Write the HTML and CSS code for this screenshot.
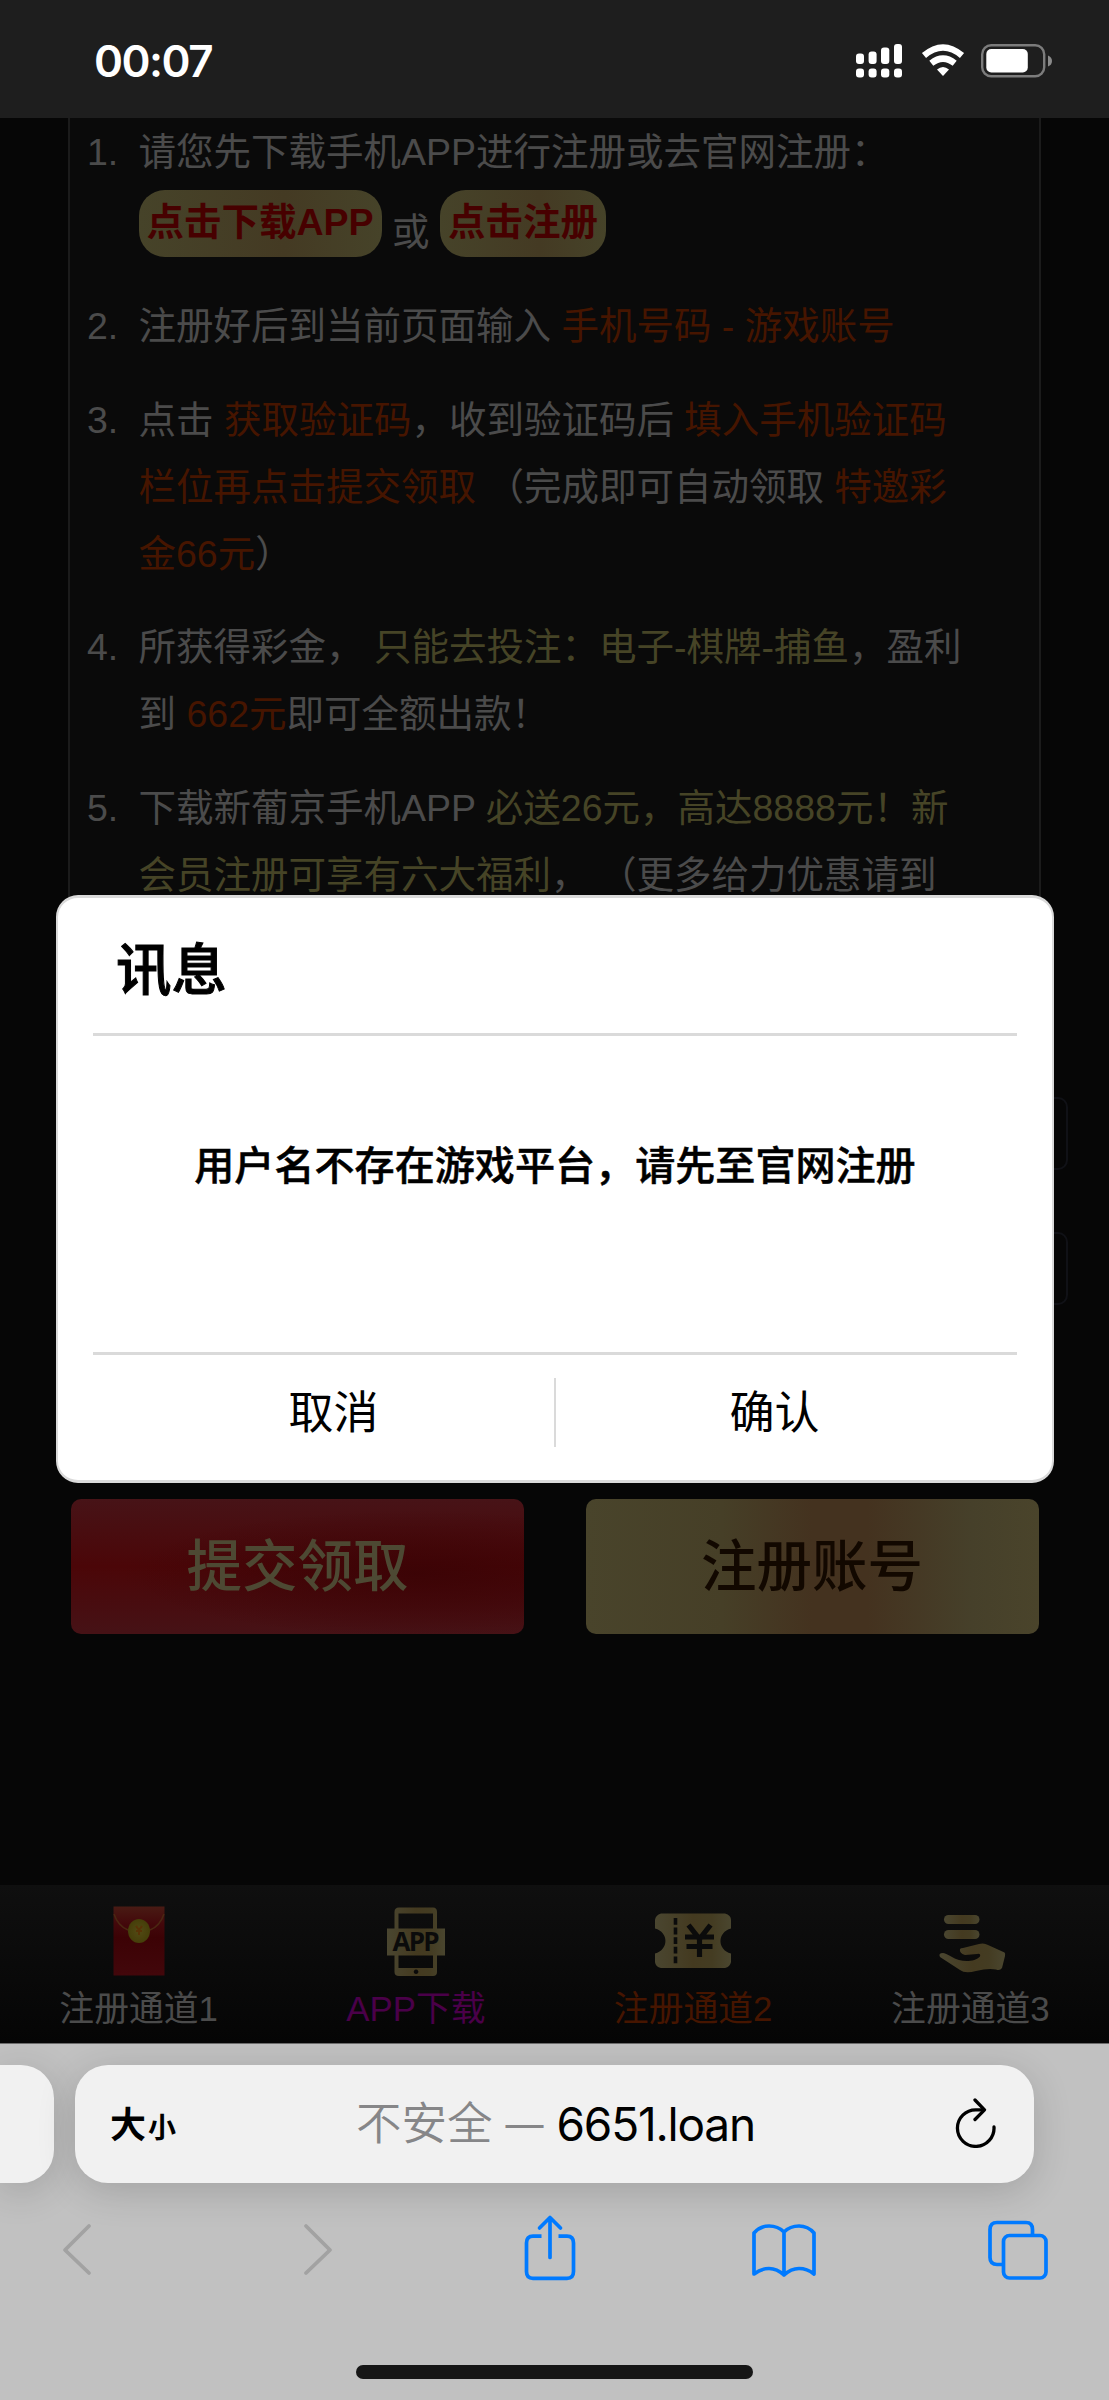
FILE: index.html
```html
<!DOCTYPE html>
<html lang="zh-CN">
<head>
<meta charset="utf-8">
<title>6651.loan</title>
<link rel="stylesheet" href="styles.css">
</head>
<body>
<header class="status">
  <span class="clock">00:07</span>
  <div class="status-icons">
    <svg width="46" height="34" viewBox="0 0 46 34" fill="#fff"><rect x="0" y="9.500" width="8" height="10.500" rx="3"/><rect x="12.600" y="7.500" width="8" height="12.500" rx="3"/><rect x="25" y="3.500" width="8.300" height="16.500" rx="3"/><rect x="38" y="0" width="8" height="20" rx="3"/><rect x="0" y="24.500" width="8" height="9" rx="3"/><rect x="12.600" y="24.500" width="8" height="9" rx="3"/><rect x="25" y="24.500" width="8.300" height="9" rx="3"/><rect x="38" y="24.500" width="8" height="9" rx="3"/></svg>
    <svg class="wifi" width="44" height="33" viewBox="0 0 44 33" fill="none" stroke="#fff" stroke-width="6.400"><path d="M3 11.500Q22-4.500 41 11.500"/><path d="M10.300 19.300Q22 10 33.700 19.300"/><path d="M16 25.500Q22 20.500 28 25.500L22 32Z" fill="#fff" stroke="none"/></svg>
    <svg class="battery" width="71" height="34" viewBox="0 0 71 34"><rect x="1.200" y="1.200" width="62" height="31" rx="9" fill="none" stroke="#7c7c7c" stroke-width="2.400"/><rect x="5.300" y="5" width="41.500" height="23.400" rx="5" fill="#fff"/><path d="M67 11.500Q71 13 71 17T67 22.500Z" fill="#8a8a8a"/></svg>
  </div>
</header>

<main class="page">
  <ol class="rules">
    <li><span class="num">1.</span>
      <div>请您先下载手机APP进行注册或去官网注册：
        <div class="links"><a class="pill">点击下载APP</a><span>或</span><a class="pill">点击注册</a></div>
      </div></li>
    <li><span class="num">2.</span><div>注册好后到当前页面输入 <b class="hot">手机号码 - 游戏账号</b></div></li>
    <li><span class="num">3.</span><div>点击 <b class="hot">获取验证码</b>，收到验证码后 <b class="hot">填入手机验证码<br>栏位再点击提交领取</b> （完成即可自动领取 <b class="hot">特邀彩<br>金66元</b>）</div></li>
    <li><span class="num">4.</span><div>所获得彩金， <b class="gold">只能去投注：电子-棋牌-捕鱼</b>，盈利<br>到 <b class="hot">662元</b>即可全额出款！</div></li>
    <li><span class="num">5.</span><div>下载新葡京手机APP <b class="gold">必送26元，高达8888元！新<br>会员注册可享有六大福利</b>， （更多给力优惠请到</div></li>
  </ol>
  <div class="fields"><div class="field"></div><div class="field"></div></div>
  <div class="actions"><a class="btn btn-red">提交领取</a><a class="btn btn-gold">注册账号</a></div>

  <section class="modal">
    <h2 class="modal-title">讯息</h2>
    <p class="modal-text">用户名不存在游戏平台，请先至官网注册</p>
    <div class="modal-actions"><a>取消</a><i class="split"></i><a>确认</a></div>
  </section>
</main>

<nav class="tabs">
  <a class="tab">
    <svg width="52" height="70" viewBox="0 0 52 70">
      <defs>
        <linearGradient id="env" x1="0" y1="0" x2="0" y2="1"><stop offset="0" stop-color="#491b14"/><stop offset=".25" stop-color="#43080b"/><stop offset=".45" stop-color="#3c0205"/><stop offset="1" stop-color="#42070b"/></linearGradient>
        <radialGradient id="coin"><stop offset="0" stop-color="#534a15"/><stop offset="1" stop-color="#453e09"/></radialGradient>
        <linearGradient id="metal"><stop offset="0" stop-color="#4a4630"/><stop offset=".5" stop-color="#443a20"/><stop offset=".75" stop-color="#443c22"/><stop offset="1" stop-color="#4a462f"/></linearGradient>
      </defs>
      <rect x=".5" y=".5" width="51" height="69" fill="url(#env)"/>
      <path d="M1 8Q5 20 15 24M51 8Q47 20 37 24" fill="none" stroke="#4b2712" stroke-width="1.500"/>
      <ellipse cx="26" cy="25" rx="11" ry="12" fill="url(#coin)"/>
      <path d="M23 20l3 4 3-4M26 24v5M23 25h6" fill="none" stroke="#583306" stroke-width="2"/>
    </svg>
    <span>注册通道1</span>
  </a>
  <a class="tab tab-app">
    <svg width="60" height="70" viewBox="0 0 60 70"><path fill="url(#metal)" fill-rule="evenodd" d="M13 1.500H47Q51 1.500 51 6V22.500H59V49.500H51V66Q51 70 47 70H13Q8.500 70 8.500 66V49.500H1V22.500H8.500V6Q8.500 1.500 13 1.500ZM12.500 7.500V22.500H47V7.500ZM12.500 49.500V62H47V49.500ZM30 63.500a2.300 2.300 0 1 0 .1 0Z"/><text x="30" y="44.800" text-anchor="middle" textLength="47" class="icon-app">APP</text></svg>
    <span>APP下载</span>
  </a>
  <a class="tab tab-hot">
    <svg width="78" height="70" viewBox="0 0 78 70"><path fill="url(#metal)" d="M7 7.500H71Q77 9 77 14V22.500C63 26 63 44 77 47.500V56Q76 61 71 62H7Q1.500 61 1 56V47.500C15 44 15 26 1 22.500V14Q1.500 9 7 7.500Z"/><path d="M21.500 12V58" stroke="#0b0b0b" stroke-width="3.600" stroke-dasharray="6.800 2.800"/><path d="M34.500 19L45.500 33L56.500 19M31 31H60M32.500 40.500H58.500M45.500 32V51" fill="none" stroke="#0b0b0b" stroke-width="5.200"/></svg>
    <span>注册通道2</span>
  </a>
  <a class="tab">
    <svg class="hand" width="68" height="70" viewBox="0 0 68 70" fill="url(#metal)"><rect x="6" y="9" width="35.500" height="9" rx="4.500"/><rect x="6" y="24" width="35.500" height="9" rx="4.500"/><path d="M25 42L41 38Q46 36.500 50 39L66.500 46.500Q67.500 47 67 50L64 62Q62 65 58 63.500Q50 62 38 65Q27 68 22 64L2 51Q0 47 5 47Q7 47 14 51C23 57 37 56 42 50.500Q43 47 39 48L27 49Q21 47 22 43Q23 42 25 42Z"/></svg>
    <span>注册通道3</span>
  </a>
</nav>

<footer class="browser">
  <div class="address-row">
    <div class="address-prev"></div>
    <div class="address">
      <span class="aa">大<small>小</small></span>
      <span class="url"><span class="unsafe">不安全</span><span class="dash">—</span><span>6651.loan</span></span>
      <svg class="reload" width="42" height="50" viewBox="0 0 42 50" fill="none" stroke="#000" stroke-width="3.300" stroke-linecap="round" stroke-linejoin="round"><path d="M28 11.800H21A18.300 18.300 0 1 0 39 29"/><path d="M20 2L29.500 11.800L20 21.500"/></svg>
    </div>
  </div>
  <div class="toolbar">
    <svg class="back" width="30" height="70" viewBox="0 0 30 70" fill="none" stroke="#a2a2a2" stroke-width="3.800" stroke-linecap="round" stroke-linejoin="round"><path d="M27 13L3 37L27 60"/></svg>
    <svg class="forward" width="30" height="70" viewBox="0 0 30 70" fill="none" stroke="#a2a2a2" stroke-width="3.800" stroke-linecap="round" stroke-linejoin="round"><path d="M3 13L27 37L3 60"/></svg>
    <svg class="share" width="52" height="70" viewBox="0 0 52 70" fill="none" stroke="#007aff" stroke-width="3.700" stroke-linejoin="round"><path d="M17.500 23.200H9Q2.500 23.200 2.500 30V58.500Q2.500 65.300 9 65.300H43Q49.500 65.300 49.500 58.500V30Q49.500 23.200 43 23.200H34.500"/><path d="M26 44.500V5M15.500 15L26 4.500L36.500 15" stroke-linecap="round"/></svg>
    <svg class="book" width="64" height="70" viewBox="0 0 64 70" fill="none" stroke="#007aff" stroke-width="3.700" stroke-linecap="round" stroke-linejoin="round"><path d="M32 19Q26 13 17 13T2 20V61Q9 55.500 17 55.500T32 62Q39 55.500 47 55.500T62 61V20Q56 13 47 13T32 19V62"/></svg>
    <svg class="windows" width="60" height="70" viewBox="0 0 60 70" fill="none" stroke="#007aff" stroke-width="3.700"><rect x="15.500" y="22.500" width="42.500" height="42.500" rx="6"/><path d="M15.500 51.500H9Q2 51.500 2 44.500V16.500Q2 9.500 9 9.500H38Q44.500 9.500 44.500 16.500V22.500"/></svg>
  </div>
  <div class="home"></div>
</footer>
</body>
</html>
```
FILE: styles.css
```css
* { box-sizing: border-box; }
body {
  margin: 0;
  width: 1109px;
  height: 2400px;
  display: flex;
  flex-direction: column;
  overflow: hidden;
  background: #060606;
  color: #4b4b4b;
  font-family: "Liberation Sans", "Noto Sans CJK SC", sans-serif;
}
svg { display: block; flex: none; }

/* phone status bar */
.status {
  height: 118px;
  background: #1e1e1e;
  display: flex;
  justify-content: space-between;
  align-items: center;
  padding: 4px 57px 0 94px;
}
.clock { color: #fff; font: 600 44px/1 Inter, sans-serif; letter-spacing: -1.500px; }
.status-icons { display: flex; }
.wifi { margin-left: 18.500px; }
.battery { margin-left: 16.500px; }

/* dimmed page */
.page { position: relative; height: 1767px; flex: none; }
.rules {
  list-style: none;
  margin: 0 68px;
  height: 886px;
  padding: 1px 0 0 17px;
  border: solid #1b1b1b;
  border-width: 0 2px 2px;
  background: #0a0a0a;
  font-size: 37.500px;
  line-height: 67px;
  white-space: nowrap;
}
.rules li { display: flex; margin-bottom: 26.700px; }
.num { width: 51.500px; }
.rules b { font-weight: 400; }
.hot { color: #461500; }
.gold { color: #464426; }
.links { display: flex; gap: 10.400px; height: 80.400px; }
.links span { align-self: flex-end; }
.pill {
  margin-top: 4px;
  height: 67px;
  line-height: 65px;
  padding: 0 8px;
  border-radius: 26px;
  background: linear-gradient(90deg, #464329, #443a23 60%, #464329);
  color: #470000;
  font-weight: 700;
}
.fields { padding: 93px 41px 0 100px; }
.field { height: 73px; margin-bottom: 62px; border: 2px solid #101116; border-radius: 10px; }
.actions { display: flex; justify-content: space-between; padding: 0 70.500px 0 71px; margin-top: 194px; }
.btn {
  width: 453px;
  height: 135px;
  border-radius: 10px;
  font-size: 55.500px;
  font-weight: 500;
  line-height: 136px;
  text-align: center;
}
.btn-red {
  color: #4d4933;
  background: radial-gradient(ellipse at 76% 55%, rgba(58,3,5,.9), rgba(60,5,7,0) 60%), linear-gradient(#471317, #4b0608 50%, #461216);
}
.btn-gold { color: #120800; background: linear-gradient(90deg, #49442b, #463f27 30%, #44321f 50%, #44321f 62%, #46402a 85%, #4a442b); }

/* dialog */
.modal {
  position: absolute;
  left: 56px;
  top: 777px;
  width: 998px;
  height: 588px;
  padding: 0 35px;
  border: 3px solid #dadada;
  border-left-width: 2px;
  border-right-width: 2px;
  border-radius: 22px;
  background: #fff;
  color: #000;
}
.modal-title { margin: 0; height: 138px; padding-left: 23px; border-bottom: 3px solid #dadada; font-size: 55.500px; font-weight: 500; line-height: 146px; -webkit-text-stroke: 1px #000; }
.modal-text { margin: 0; height: 319px; border-bottom: 3px solid #dadada; font-size: 40.100px; font-weight: 500; line-height: 260px; text-align: center; white-space: nowrap; -webkit-text-stroke: .5px #000; }
.modal-actions { display: grid; grid-template-columns: 1fr 2px 1fr; align-items: center; height: 116px; font-size: 45px; line-height: 118px; text-align: center; }
.modal-actions a:first-child { padding-left: 20px; }
.modal-actions a:last-child { padding-right: 24px; }
.split { height: 69px; margin-top: -3px; background: #dadada; }

/* page tab bar */
.tabs { display: flex; height: 158px; flex: none; padding-top: 21px; background: linear-gradient(#0f0f0f, #050505); }
.tab { flex: 1; display: flex; flex-direction: column; align-items: center; font-size: 34.800px; line-height: 66px; }
.tab-app { color: #4a0049; }
.tab-hot { color: #461500; }
.hand { margin-left: 4px; }
.icon-app { font: 700 26px "Open Sans", sans-serif; fill: #0b0b0b; }

/* browser chrome */
.browser { height: 357px; flex: none; overflow: hidden; background: #c1c1c1; border-top: 1px solid #6b6b6b; padding-top: 21px; }
.address-row { display: flex; gap: 21.500px; height: 118px; }
.address-prev, .address { background: #f1f1f1; box-shadow: 0 8px 38px rgba(0,0,0,.16); }
.address-prev { width: 53.500px; border-radius: 0 33px 33px 0; }
.address { width: 959px; border-radius: 33px; display: flex; align-items: center; padding: 0 37px 0 35px; color: #000; }
.aa { font-size: 36px; font-weight: 700; width: 246px; white-space: nowrap; line-height: 1; padding-top: 4px; }
.aa small { font-size: 28px; margin-left: 2px; }
.url { display: flex; align-items: center; font: 46px/118px Inter, "Noto Sans CJK SC", sans-serif; letter-spacing: -1.200px; white-space: nowrap; }
.unsafe, .dash { color: #868688; letter-spacing: 0; }
.unsafe { font-size: 45.500px; font-weight: 350; }
.dash { width: 64px; text-align: center; font-size: 38px; }
.reload { margin: -3px 0 0 auto; }
.toolbar { display: flex; height: 70px; margin-top: 30px; }
.back { margin-left: 62px; }
.forward { margin-left: 211px; }
.share { margin-left: 191px; }
.book { margin-left: 176px; }
.windows { margin-left: 172px; }
.home { width: 397px; height: 13.500px; border-radius: 7px; margin: 82px auto 0; background: #161616; }
```
